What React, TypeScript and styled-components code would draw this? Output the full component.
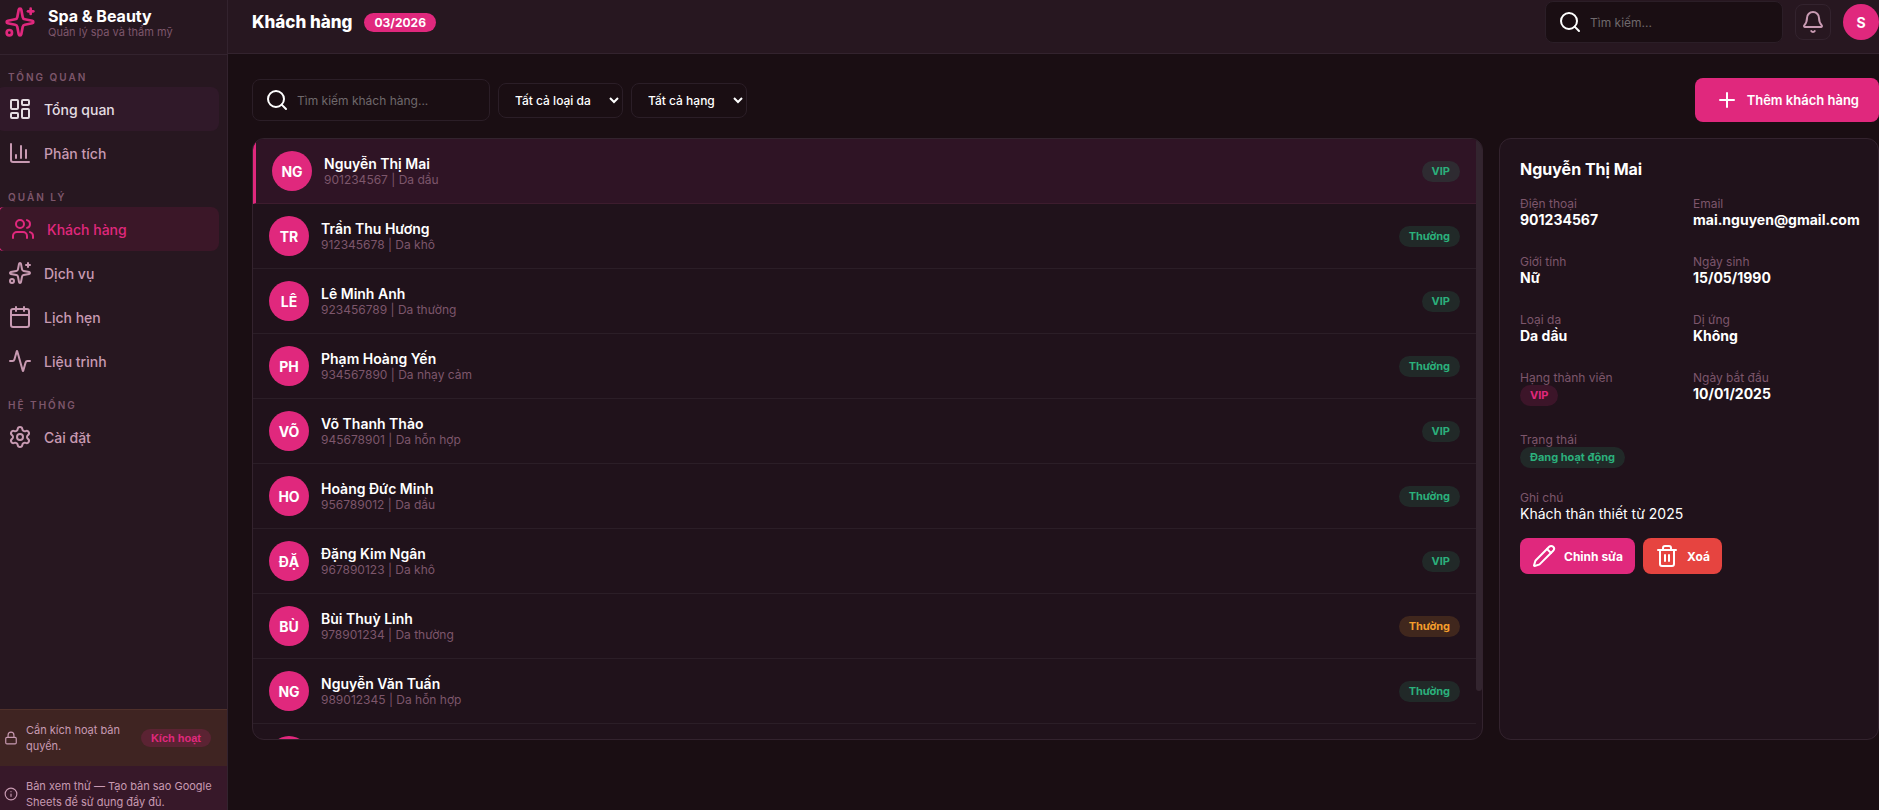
import React from 'react';
import styled, { createGlobalStyle, css } from 'styled-components';
import {
  Activity,
  Bell,
  Calendar,
  Info,
  LayoutDashboard,
  Lock,
  Pencil,
  Plus,
  Search,
  Settings,
  Sparkles,
  Users,
} from 'lucide-react';

const color = {
  page: '#1a0e13',
  bar: '#271720',
  card: '#20121b',
  line: '#33232e',
  lineSoft: '#2b1e27',
  brand: '#e0287d',
  danger: '#e64440',
  text: '#ffffff',
  soft: '#c89ab2',
  muted: '#7d566b',
};

const GlobalStyle = createGlobalStyle`
  *, *::before, *::after { box-sizing: border-box; }
  html, body { margin: 0; background: ${color.page}; }
  body, button, input, select {
    font-family: Inter, "Liberation Sans", sans-serif;
  }
  body { color: ${color.text}; font-size: 14px; -webkit-font-smoothing: antialiased; }
  h1, h2, p, dl, dd, ul { margin: 0; padding: 0; }
  svg { display: block; flex: none; }
`;

const Shell = styled.div`
  display: grid;
  grid-template-columns: 228px minmax(0, 1fr);
  height: 100vh;
  overflow: hidden;
`;

/* ---------- Sidebar ---------- */

const Sidebar = styled.aside`
  display: flex;
  flex-direction: column;
  min-height: 0;
  overflow: hidden;
  background: ${color.bar};
  border-right: 1px solid ${color.line};
`;

const Brand = styled.div`
  display: flex;
  gap: 12px;
  height: 55px;
  padding: 6px 4px 0;
  border-bottom: 1px solid ${color.line};
  color: ${color.brand};
`;

const BrandName = styled.div`
  margin-top: 1px;
  color: ${color.text};
  font-size: 16px;
  font-weight: 700;
  line-height: 19px;
`;

const BrandNote = styled.div`
  color: ${color.muted};
  font-size: 11px;
  line-height: 13px;
`;

const Nav = styled.nav`
  flex: 1;
  min-height: 0;
  margin: 0 8px 0 -4px;
`;

const NavHeading = styled.h2`
  height: 32px;
  padding: 16px 12px 0;
  color: ${color.muted};
  font-size: 10px;
  font-weight: 600;
  line-height: 12px;
  letter-spacing: 2px;
  text-transform: uppercase;
`;

const NavLink = styled.a<{ $state?: 'active' | 'hover' }>`
  display: flex;
  align-items: center;
  gap: 12px;
  height: 44px;
  padding: 0 12px;
  border-radius: 8px;
  color: ${color.soft};
  font-size: 14px;
  font-weight: 500;
  text-decoration: none;
  ${({ $state }) =>
    $state === 'active' &&
    css`
      border-left: 3px solid ${color.brand};
      background: #3b1728;
      color: ${color.brand};
    `}
  ${({ $state }) =>
    $state === 'hover' &&
    css`
      background: #301929;
      color: #e4dde2;
    `}
`;

const Notice = styled.div<{ $tone: 'warn' | 'info' }>`
  display: flex;
  align-items: center;
  gap: 8px;
  color: ${color.soft};
  font-size: 11px;
  line-height: 16px;
  ${({ $tone }) =>
    $tone === 'warn'
      ? css`
          padding: 12px 16px 12px 4px;
          border-top: 1px solid #4f302a;
          background: #3f2422;
        `
      : css`
          padding: 12px 8px 0 4px;
          background: #371829;
        `}
`;

const NoticeText = styled.p`
  flex: 1;
`;

const ActivateButton = styled.button`
  height: 18px;
  padding: 0 10px;
  border: 0;
  border-radius: 9px;
  background: #5b2333;
  color: ${color.brand};
  font-family: 'Liberation Sans', Arial, sans-serif;
  font-size: 11px;
  font-weight: 700;
  white-space: nowrap;
`;

/* ---------- Main column ---------- */

const Main = styled.main`
  display: flex;
  flex-direction: column;
  min-width: 0;
  min-height: 0;
`;

const TopBar = styled.header`
  display: flex;
  align-items: center;
  gap: 12px;
  padding: 1px 0 10px 24px;
  background: ${color.bar};
  border-bottom: 1px solid ${color.line};
`;

const PageTitle = styled.h1`
  font-size: 17px;
  font-weight: 800;
  line-height: 22px;
`;

const MonthTag = styled.span`
  padding: 2px 10px;
  margin-right: auto;
  border-radius: 10px;
  background: ${color.brand};
  font-size: 12px;
  font-weight: 700;
  line-height: 15px;
`;

const SearchBox = styled.label`
  display: flex;
  align-items: center;
  gap: 8px;
  height: 42px;
  padding: 0 12px;
  border: 1px solid ${color.lineSoft};
  border-radius: 8px;
  background: ${color.page};
`;

const SearchInput = styled.input`
  width: 180px;
  padding: 0;
  border: 0;
  outline: 0;
  background: transparent;
  color: ${color.text};
  font-size: 12px;
  &::placeholder {
    color: #6f696c;
    opacity: 1;
  }
`;

const BellButton = styled.button`
  display: grid;
  place-items: center;
  width: 36px;
  height: 36px;
  padding: 0;
  border: 1px solid ${color.line};
  border-radius: 8px;
  background: transparent;
  color: ${color.soft};
`;

const Avatar = styled.span<{ $size: number }>`
  display: grid;
  place-items: center;
  flex: none;
  width: ${({ $size }) => $size}px;
  height: ${({ $size }) => $size}px;
  border-radius: 50%;
  background: ${color.brand};
  color: ${color.text};
  font-size: 14px;
  font-weight: 700;
`;

const Content = styled.div`
  display: flex;
  flex-direction: column;
  flex: 1;
  gap: 16px;
  min-height: 0;
  padding: 24px 0 70px 24px;
`;

const Toolbar = styled.div`
  display: flex;
  align-items: center;
  gap: 8px;
`;

const SelectWrap = styled.div`
  position: relative;
`;

const Select = styled.select`
  appearance: none;
  display: block;
  height: 35px;
  padding: 0 31px 0 16px;
  border: 1px solid ${color.lineSoft};
  border-radius: 8px;
  outline: 0;
  background: ${color.page};
  color: ${color.text};
  font-size: 12px;
  font-weight: 500;
`;

const SelectArrow = styled.svg`
  position: absolute;
  top: 14px;
  right: 4px;
  pointer-events: none;
`;

const Button = styled.button<{ $tone?: 'danger'; $large?: boolean }>`
  display: flex;
  align-items: center;
  gap: 8px;
  height: ${({ $large }) => ($large ? 44 : 36)}px;
  padding: 0 ${({ $large }) => ($large ? 20 : 12)}px;
  border: 0;
  border-radius: 8px;
  background: ${({ $tone }) => ($tone === 'danger' ? color.danger : color.brand)};
  color: ${color.text};
  font-size: ${({ $large }) => ($large ? 13 : 12)}px;
  font-weight: ${({ $large }) => ($large ? 600 : 700)};
  white-space: nowrap;
`;

const ToolbarEnd = styled.div`
  margin-left: auto;
`;

const Panels = styled.div`
  display: grid;
  grid-template-columns: minmax(0, 1fr) 380px;
  grid-template-rows: minmax(0, 1fr);
  gap: 16px;
  flex: 1;
  min-height: 0;
`;

const ListPanel = styled.section`
  display: flex;
  overflow: hidden;
  border: 1px solid ${color.line};
  border-radius: 12px;
  background: ${color.card};
`;

const Scroller = styled.ul`
  flex: 1;
  min-width: 0;
  overflow-y: auto;
  scrollbar-width: none;
  list-style: none;
`;

const ScrollTrack = styled.div`
  flex: none;
  width: 6px;
`;

const ScrollThumb = styled.div`
  height: 92%;
  border-radius: 3px;
  background: #33252f;
`;

const Row = styled.li<{ $selected?: boolean }>`
  display: flex;
  align-items: center;
  gap: 12px;
  padding: 12px 16px;
  border-bottom: 1px solid ${({ $selected }) => ($selected ? '#3d1c2e' : color.lineSoft)};
  ${({ $selected }) =>
    $selected &&
    css`
      border-left: 3px solid ${color.brand};
      background: #2f1425;
    `}
`;

const RowText = styled.div`
  flex: 1;
  min-width: 0;
`;

const RowName = styled.div`
  font-size: 14px;
  font-weight: 600;
  line-height: 17px;
`;

const RowNote = styled.div`
  color: ${color.muted};
  font-size: 12px;
  line-height: 15px;
`;

type Tone = 'green' | 'orange' | 'pink';

const toneStyles: Record<Tone, { ink: string; fill: string }> = {
  green: { ink: '#2bb07c', fill: 'rgba(43, 176, 124, 0.15)' },
  orange: { ink: '#f59e2c', fill: 'rgba(245, 158, 44, 0.15)' },
  pink: { ink: color.brand, fill: 'rgba(224, 40, 125, 0.15)' },
};

const Badge = styled.span<{ $tone: Tone }>`
  display: block;
  width: fit-content;
  padding: 4px 10px;
  border-radius: 11px;
  background: ${({ $tone }) => toneStyles[$tone].fill};
  color: ${({ $tone }) => toneStyles[$tone].ink};
  font-size: 11px;
  font-weight: 700;
  line-height: 13px;
`;

/* ---------- Detail card ---------- */

const DetailPanel = styled.section`
  padding: 20px;
  border: 1px solid ${color.line};
  border-radius: 12px;
  background: ${color.card};
`;

const DetailTitle = styled.h2`
  margin-bottom: 16px;
  font-size: 16px;
  font-weight: 700;
  line-height: 21px;
`;

const Fields = styled.dl`
  display: grid;
  grid-template-columns: repeat(2, minmax(0, 1fr));
  gap: 26px 8px;
`;

const Field = styled.div``;

const FieldLabel = styled.dt`
  color: ${color.muted};
  font-size: 12px;
  line-height: 15px;
`;

const FieldValue = styled.dd<{ $plain?: boolean }>`
  font-size: 14px;
  font-weight: ${({ $plain }) => ($plain ? 400 : 700)};
  line-height: 17px;
`;

const StatusFields = styled.dl`
  display: grid;
  gap: 22px;
  margin-top: 26px;
`;

const Actions = styled.div`
  display: flex;
  gap: 8px;
  margin-top: 16px;
`;

/* ---------- Icons ---------- */

const TrashIcon = () => (
  <svg width="24" height="24" viewBox="0 0 24 24" fill="none" stroke="currentColor" strokeWidth="2" strokeLinecap="round" strokeLinejoin="round" aria-hidden="true">
    <path d="M3 6h18" />
    <path d="M19 6v14a2 2 0 0 1-2 2H7a2 2 0 0 1-2-2V6" />
    <path d="M8 6V4a2 2 0 0 1 2-2h4a2 2 0 0 1 2 2v2" />
    <path d="M10 11v6M14 11v6" />
  </svg>
);

const ChartIcon = () => (
  <svg width="24" height="24" viewBox="0 0 24 24" fill="none" stroke="currentColor" strokeWidth="2" strokeLinecap="round" strokeLinejoin="round" aria-hidden="true">
    <path d="M3 3v16a2 2 0 0 0 2 2h16" />
    <path d="M18 17V9M13 17V5M8 17v-3" />
  </svg>
);

/* ---------- Data ---------- */

interface Customer {
  name: string;
  phone: string;
  skin: string;
  tier: string;
  tone: Tone;
}

const customers: Customer[] = [
  { name: 'Nguyễn Thị Mai', phone: '901234567', skin: 'Da dầu', tier: 'VIP', tone: 'green' },
  { name: 'Trần Thu Hương', phone: '912345678', skin: 'Da khô', tier: 'Thường', tone: 'green' },
  { name: 'Lê Minh Anh', phone: '923456789', skin: 'Da thường', tier: 'VIP', tone: 'green' },
  { name: 'Phạm Hoàng Yến', phone: '934567890', skin: 'Da nhạy cảm', tier: 'Thường', tone: 'green' },
  { name: 'Võ Thanh Thảo', phone: '945678901', skin: 'Da hỗn hợp', tier: 'VIP', tone: 'green' },
  { name: 'Hoàng Đức Minh', phone: '956789012', skin: 'Da dầu', tier: 'Thường', tone: 'green' },
  { name: 'Đặng Kim Ngân', phone: '967890123', skin: 'Da khô', tier: 'VIP', tone: 'green' },
  { name: 'Bùi Thuỳ Linh', phone: '978901234', skin: 'Da thường', tier: 'Thường', tone: 'orange' },
  { name: 'Nguyễn Văn Tuấn', phone: '989012345', skin: 'Da hỗn hợp', tier: 'Thường', tone: 'green' },
];

const initials = (name: string) => name.slice(0, 2).toUpperCase();

interface FilterProps {
  label: string;
  options: string[];
}

const Filter = ({ label, options }: FilterProps) => (
  <SelectWrap>
    <Select aria-label={label}>
      {options.map((option) => (
        <option key={option}>{option}</option>
      ))}
    </Select>
    <SelectArrow width="10" height="7" viewBox="0 0 10 7" fill="none" stroke="#fff" strokeWidth="2" aria-hidden="true">
      <path d="M1 1l4 4 4-4" />
    </SelectArrow>
  </SelectWrap>
);

export default function App() {
  return (
    <>
      <GlobalStyle />
      <Shell>
        <Sidebar>
          <Brand>
            <Sparkles size={32} />
            <div>
              <BrandName>Spa &amp; Beauty</BrandName>
              <BrandNote>Quản lý spa và thẩm mỹ</BrandNote>
            </div>
          </Brand>
          <Nav>
            <NavHeading>Tổng quan</NavHeading>
            <NavLink href="#tong-quan" $state="hover"><LayoutDashboard />Tổng quan</NavLink>
            <NavLink href="#phan-tich"><ChartIcon />Phân tích</NavLink>
            <NavHeading>Quản lý</NavHeading>
            <NavLink href="#khach-hang" $state="active" aria-current="page"><Users />Khách hàng</NavLink>
            <NavLink href="#dich-vu"><Sparkles />Dịch vụ</NavLink>
            <NavLink href="#lich-hen"><Calendar />Lịch hẹn</NavLink>
            <NavLink href="#lieu-trinh"><Activity />Liệu trình</NavLink>
            <NavHeading>Hệ thống</NavHeading>
            <NavLink href="#cai-dat"><Settings />Cài đặt</NavLink>
          </Nav>
          <Notice $tone="warn">
            <Lock size={14} />
            <NoticeText>Cần kích hoạt bản quyền.</NoticeText>
            <ActivateButton type="button">Kích hoạt</ActivateButton>
          </Notice>
          <Notice $tone="info">
            <Info size={14} />
            <NoticeText>Bản xem thử — Tạo bản sao Google Sheets để sử dụng đầy đủ.</NoticeText>
          </Notice>
        </Sidebar>

        <Main>
          <TopBar>
            <PageTitle>Khách hàng</PageTitle>
            <MonthTag>03/2026</MonthTag>
            <SearchBox>
              <Search />
              <SearchInput type="text" placeholder="Tìm kiếm..." aria-label="Tìm kiếm" />
            </SearchBox>
            <BellButton type="button" aria-label="Thông báo"><Bell /></BellButton>
            <Avatar $size={36}>S</Avatar>
          </TopBar>

          <Content>
            <Toolbar>
              <SearchBox>
                <Search />
                <SearchInput type="text" placeholder="Tìm kiếm khách hàng..." aria-label="Tìm kiếm khách hàng" />
              </SearchBox>
              <Filter label="Loại da" options={['Tất cả loại da', 'Da dầu', 'Da khô']} />
              <Filter label="Hạng" options={['Tất cả hạng', 'VIP', 'Thường']} />
              <ToolbarEnd>
                <Button type="button" $large><Plus />Thêm khách hàng</Button>
              </ToolbarEnd>
            </Toolbar>

            <Panels>
              <ListPanel>
                <Scroller>
                  {customers.map((customer, index) => (
                    <Row key={customer.phone} $selected={index === 0}>
                      <Avatar $size={40}>{initials(customer.name)}</Avatar>
                      <RowText>
                        <RowName>{customer.name}</RowName>
                        <RowNote>{customer.phone} | {customer.skin}</RowNote>
                      </RowText>
                      <Badge $tone={customer.tone}>{customer.tier}</Badge>
                    </Row>
                  ))}
                  <Row aria-hidden="true">
                    <Avatar $size={40} />
                  </Row>
                </Scroller>
                <ScrollTrack aria-hidden="true">
                  <ScrollThumb />
                </ScrollTrack>
              </ListPanel>

              <DetailPanel>
                <DetailTitle>Nguyễn Thị Mai</DetailTitle>
                <Fields>
                  <Field><FieldLabel>Điện thoại</FieldLabel><FieldValue>901234567</FieldValue></Field>
                  <Field><FieldLabel>Email</FieldLabel><FieldValue>mai.nguyen@gmail.com</FieldValue></Field>
                  <Field><FieldLabel>Giới tính</FieldLabel><FieldValue>Nữ</FieldValue></Field>
                  <Field><FieldLabel>Ngày sinh</FieldLabel><FieldValue>15/05/1990</FieldValue></Field>
                  <Field><FieldLabel>Loại da</FieldLabel><FieldValue>Da dầu</FieldValue></Field>
                  <Field><FieldLabel>Dị ứng</FieldLabel><FieldValue>Không</FieldValue></Field>
                  <Field><FieldLabel>Hạng thành viên</FieldLabel><FieldValue><Badge $tone="pink">VIP</Badge></FieldValue></Field>
                  <Field><FieldLabel>Ngày bắt đầu</FieldLabel><FieldValue>10/01/2025</FieldValue></Field>
                </Fields>
                <StatusFields>
                  <Field><FieldLabel>Trạng thái</FieldLabel><FieldValue><Badge $tone="green">Đang hoạt động</Badge></FieldValue></Field>
                  <Field><FieldLabel>Ghi chú</FieldLabel><FieldValue $plain>Khách thân thiết từ 2025</FieldValue></Field>
                </StatusFields>
                <Actions>
                  <Button type="button"><Pencil />Chỉnh sửa</Button>
                  <Button type="button" $tone="danger"><TrashIcon />Xoá</Button>
                </Actions>
              </DetailPanel>
            </Panels>
          </Content>
        </Main>
      </Shell>
    </>
  );
}
